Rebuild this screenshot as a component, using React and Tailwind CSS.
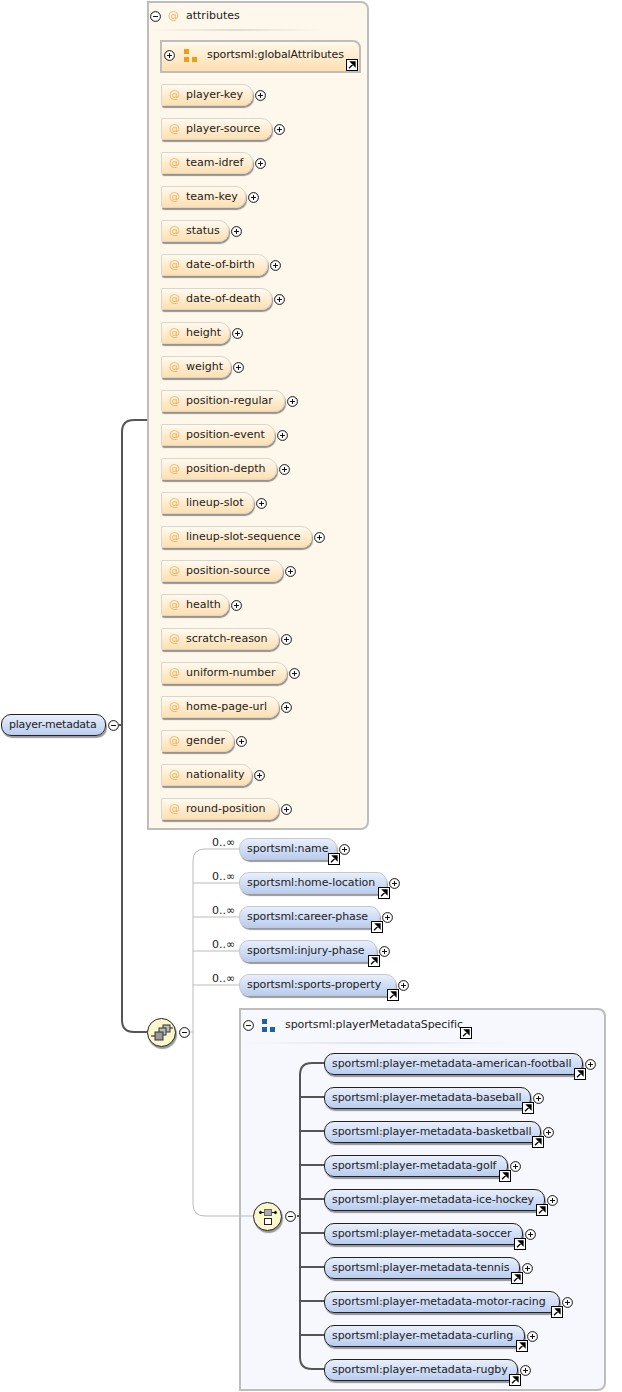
const attributes = [
  { name: 'player-key', width: 'w-[92px]' },
  { name: 'player-source', width: 'w-[111px]' },
  { name: 'team-idref', width: 'w-[92px]' },
  { name: 'team-key', width: 'w-[85px]' },
  { name: 'status', width: 'w-[68px]' },
  { name: 'date-of-birth', width: 'w-[107px]' },
  { name: 'date-of-death', width: 'w-[111px]' },
  { name: 'height', width: 'w-[69px]' },
  { name: 'weight', width: 'w-[70px]' },
  { name: 'position-regular', width: 'w-[124px]' },
  { name: 'position-event', width: 'w-[114px]' },
  { name: 'position-depth', width: 'w-[116px]' },
  { name: 'lineup-slot', width: 'w-[93px]' },
  { name: 'lineup-slot-sequence', width: 'w-[151px]' },
  { name: 'position-source', width: 'w-[122px]' },
  { name: 'health', width: 'w-[68px]' },
  { name: 'scratch-reason', width: 'w-[118px]' },
  { name: 'uniform-number', width: 'w-[126px]' },
  { name: 'home-page-url', width: 'w-[118px]' },
  { name: 'gender', width: 'w-[73px]' },
  { name: 'nationality', width: 'w-[91px]' },
  { name: 'round-position', width: 'w-[118px]' },
];

const optionalElements = [
  { name: 'sportsml:name', width: 'w-[98px]' },
  { name: 'sportsml:home-location', width: 'w-[148px]' },
  { name: 'sportsml:career-phase', width: 'w-[141px]' },
  { name: 'sportsml:injury-phase', width: 'w-[138px]' },
  { name: 'sportsml:sports-property', width: 'w-[157px]' },
];

const specificElements = [
  { name: 'sportsml:player-metadata-american-football', width: 'w-[259px]' },
  { name: 'sportsml:player-metadata-baseball', width: 'w-[207px]' },
  { name: 'sportsml:player-metadata-basketball', width: 'w-[217px]' },
  { name: 'sportsml:player-metadata-golf', width: 'w-[184px]' },
  { name: 'sportsml:player-metadata-ice-hockey', width: 'w-[221px]' },
  { name: 'sportsml:player-metadata-soccer', width: 'w-[199px]' },
  { name: 'sportsml:player-metadata-tennis', width: 'w-[196px]' },
  { name: 'sportsml:player-metadata-motor-racing', width: 'w-[236px]' },
  { name: 'sportsml:player-metadata-curling', width: 'w-[201px]' },
  { name: 'sportsml:player-metadata-rugby', width: 'w-[194px]' },
];

const Toggle = ({ open = false }) => (
  <svg width="11" height="11" viewBox="0 0 11 11" className="shrink-0">
    <circle cx="5.5" cy="5.5" r="4.9" fill="#fff" stroke="#111" strokeWidth="1" />
    <path d={open ? 'M3 5.5H8' : 'M3 5.5H8M5.5 3V8'} stroke="#111" strokeWidth="1" />
  </svg>
);

const LinkBadge = ({ className }) => (
  <svg width="12" height="12" viewBox="0 0 12 12" className={className}>
    <rect x="0.5" y="0.5" width="11" height="11" fill="#fff" stroke="#000" />
    <path d="M3 9.2L8 4.2M4.8 3H9V7.2Z" fill="#000" stroke="#000" strokeWidth="1.3" />
  </svg>
);

const GroupIcon = ({ color }) => (
  <svg width="13" height="13" viewBox="0 0 13 13" className="shrink-0">
    <rect x="0" y="0" width="5" height="5" fill={color} />
    <rect x="0" y="8" width="5" height="5" fill={color} />
    <rect x="8" y="8" width="5" height="5" fill={color} />
  </svg>
);

const AttributePill = ({ name, width }) => (
  <div className="flex items-center gap-[2px] h-[22px]">
    <div className={`${width} h-[22px] flex items-center pl-[7px] rounded-l-[2px] rounded-r-[10px] border border-[#dcd6c8] bg-gradient-to-b from-[#fffaf0] to-[#fedfb0] shadow-[1px_2px_1px_rgba(0,0,0,0.4)]`}>
      <span className="text-[#f3b35c] w-[17px]">@</span>
      <span className="whitespace-nowrap">{name}</span>
    </div>
    <Toggle />
  </div>
);

const ElementPill = ({ name, width, required }) => (
  <div className="flex items-center h-[22px] gap-[2px]">
    <div className={`${width} relative h-[22px] flex items-center pl-[7px] pt-[1px] rounded-[10px] border ${required ? 'border-[#222]' : 'border-[#c4c8d0]'} bg-gradient-to-b from-[#e9effb] to-[#b9cdf0] shadow-[1px_2px_1px_rgba(0,0,0,0.4)]`}>
      <span className="whitespace-nowrap tracking-[-0.1px]">{name}</span>
      <LinkBadge className="absolute right-[-4px] bottom-[-6px]" />
    </div>
    <Toggle />
  </div>
);

const Bubble = ({ className, children }) => (
  <div className={`absolute flex items-center gap-[3px] ${className}`}>
    <div className="w-[29px] h-[29px] rounded-full border border-[#222] bg-[#fbf7cc] shadow-[1px_2px_1px_rgba(0,0,0,0.4)] flex items-center justify-center">
      {children}
    </div>
    <Toggle open />
  </div>
);

export default function App() {
  return (
    <div className="relative w-[622px] h-[1392px] bg-white overflow-hidden text-[11px] text-[#222] font-['DejaVu_Sans',sans-serif]">
      <div className="absolute left-[1px] top-[714px] flex items-center gap-[2px]">
        <div className="w-[105px] h-[22px] flex items-center pl-[7px] pt-[1px] rounded-[10px] border border-[#222] bg-gradient-to-b from-[#e9effb] to-[#b9cdf0] shadow-[1px_2px_1px_rgba(0,0,0,0.4)]">
          <span className="tracking-[-0.25px]">player-metadata</span>
        </div>
        <Toggle open />
      </div>

      {/* attributes box */}
      <div className="absolute left-[147px] top-[1px] w-[222px] h-[829px] border-2 border-[#bdbdbd] rounded-tr-[8px] rounded-br-[8px] bg-[#fdf7ec] flex flex-col">
        <div className="flex items-center h-[26px] pl-[1px] pt-[1px]">
          <Toggle open />
          <span className="text-[#f3b35c] ml-[7px] w-[18px]">@</span>
          <span>attributes</span>
        </div>
        <div className="h-[2px] ml-[2px] w-[170px] bg-gradient-to-r from-transparent via-[#e2dcd0] to-transparent" />
        <div className="relative mt-[9px] ml-[11px] w-[201px] h-[33px] border-2 border-[#bdbdbd] rounded-tr-[8px] bg-gradient-to-b from-[#fff8ea] to-[#fedfb0] flex items-center pl-[2px] pb-[3px]">
          <Toggle />
          <span className="ml-[9px]"><GroupIcon color="#f39c12" /></span>
          <span className="ml-[10px] whitespace-nowrap tracking-[-0.1px]">sportsml:globalAttributes</span>
          <LinkBadge className="absolute right-[1px] bottom-[0px]" />
        </div>
        <div className="mt-[11px] ml-[12px] flex flex-col gap-[12px]">
          {attributes.map((attribute) => (
            <AttributePill key={attribute.name} {...attribute} />
          ))}
        </div>
      </div>

      {/* optional elements */}
      <div className="absolute left-[239px] top-[838px] flex flex-col gap-[12px]">
        {optionalElements.map((element) => (
          <div key={element.name} className="relative">
            <span className="absolute left-[-27px] top-[-3px]">0..∞</span>
            <ElementPill {...element} />
          </div>
        ))}
      </div>

      {/* playerMetadataSpecific box */}
      <div className="absolute left-[239px] top-[1008px] w-[367px] h-[383px] border-2 border-[#bdbdbd] rounded-tr-[8px] rounded-br-[8px] bg-[#f6f8fe] flex flex-col">
        <div className="relative flex items-center h-[29px] pl-[2px] pt-[1px]">
          <Toggle open />
          <span className="ml-[8px]"><GroupIcon color="#2060a8" /></span>
          <span className="ml-[10px] whitespace-nowrap tracking-[-0.1px]">sportsml:playerMetadataSpecific</span>
          <LinkBadge className="absolute left-[219px] top-[17px]" />
        </div>
        <div className="h-[2px] ml-[2px] mt-[3px] w-[270px] bg-gradient-to-r from-transparent via-[#dfe2ea] to-transparent" />
        <div className="mt-[9px] ml-[83px] flex flex-col gap-[12px]">
          {specificElements.map((element) => (
            <ElementPill key={element.name} {...element} required />
          ))}
        </div>
      </div>

      {/* connector lines */}
      <svg width="622" height="1392" className="absolute inset-0 pointer-events-none" fill="none">
        <path d="M147 420H134Q122 420 122 432V1020Q122 1032 134 1032H147M119 725H122" stroke="#555" strokeWidth="2" />
        <path d="M239 849H205Q193 849 193 861V1204Q193 1216 205 1216H253M193 883H239M193 917H239M193 951H239M193 985H239M190 1032H193" stroke="#bbb" />
        <path d="M324 1063H312Q300 1063 300 1075V1357Q300 1369 312 1369H324M300 1097H324M300 1131H324M300 1165H324M300 1199H324M300 1233H324M300 1267H324M300 1301H324M300 1335H324M297 1216H300" stroke="#555" strokeWidth="2" />
      </svg>

      {/* compositor bubbles */}
      <Bubble className="left-[147px] top-[1018px]">
        <svg width="24" height="20" viewBox="0 0 24 20" fill="none">
          <path d="M1 13H5M19 5H23" stroke="#111" />
          <rect x="13" y="2" width="7" height="7" fill="#bbb" stroke="#333" />
          <rect x="9" y="5" width="7" height="7" fill="#bbb" stroke="#333" />
          <rect x="5" y="9" width="8" height="8" fill="#999" stroke="#333" />
        </svg>
      </Bubble>
      <Bubble className="left-[253px] top-[1202px]">
        <svg width="20" height="20" viewBox="0 0 20 20" fill="none">
          <path d="M1 5.5H6M14 5.5H19" stroke="#111" />
          <path d="M1 5.5L3 4V7ZM19 5.5L17 4V7Z" fill="#111" stroke="#111" />
          <rect x="6.5" y="2.5" width="7" height="6" fill="#aaa" stroke="#666" />
          <rect x="6.5" y="11.5" width="7" height="6" fill="#fff" stroke="#222" />
        </svg>
      </Bubble>
    </div>
  );
}
